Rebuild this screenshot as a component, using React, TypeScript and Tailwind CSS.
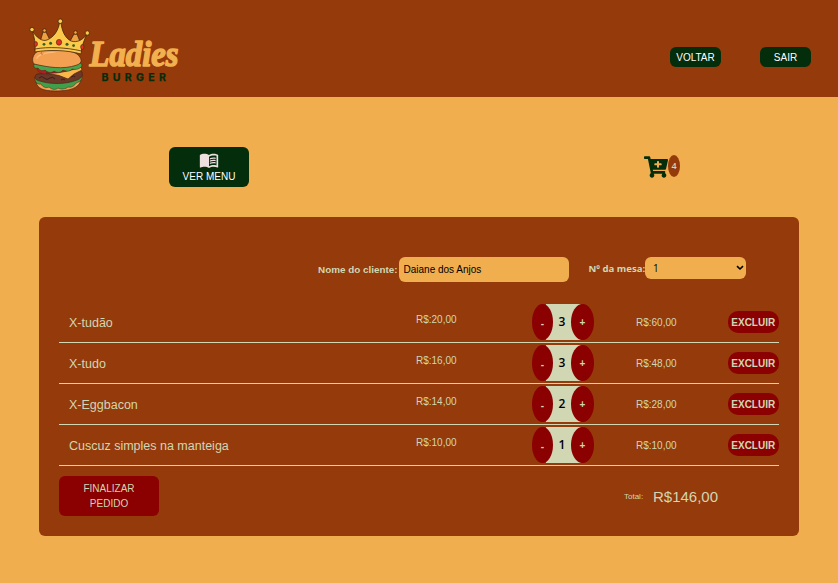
import { FaCartPlus } from "react-icons/fa";
import { MdMenuBook } from "react-icons/md";

const items = [
  { name: "X-tudão", price: "20,00", qty: 3, total: "60,00" },
  { name: "X-tudo", price: "16,00", qty: 3, total: "48,00" },
  { name: "X-Eggbacon", price: "14,00", qty: 2, total: "28,00" },
  { name: "Cuscuz simples na manteiga", price: "10,00", qty: 1, total: "10,00" },
];

function Logo() {
  return (
    <svg viewBox="24 14 160 80" className="mt-[14px] ml-6 h-20 w-40 overflow-visible" aria-label="Ladies Burger">
      {/* burger */}
      <g stroke="#4a2412" strokeWidth="0.7" strokeLinejoin="round">
        <path d="M36 82 C37 88 43 91 55 91 C68 91 79 89 81 80 L70 79Z" fill="#f2a052" />
        <path d="M35 77 C34 81 37 85 41 84 C43 88 47 88 49 87 C52 90 56 90 58 88 C61 90 66 89 68 87 C72 88 75 85 76 83 C80 82 83 79 82 76Z" fill="#3f9f4a" strokeWidth=".5" />
        <path d="M37 74 C33 77 35 80 40 81 C50 84.5 66 84.5 77 80 C83 78 84 73 80 70 L62 72Z" fill="#6b3726" />
        <path d="M37 68 C37 73 43 74.5 49 74 L75 71 L79 67Z" fill="#b01e24" strokeWidth=".4" />
        <path d="M46 73 C57 74 69 71 81 67 L82 70 L74 74 L68 79 L59 75.5Z" fill="#fbb64a" />
        <path d="M34 64 C33 67 35 69 38 68 C40 71 43 71 45 70 C48 73 52 73 54 71 C57 73 61 73 63 70 C67 72 71 71 72 69 C76 70 80 69 82 66 C82 63 79 62 76 63Z" fill="#46a64e" strokeWidth=".5" />
        <path d="M34 64 C31 60 33 54 38 51 C48 48 70 49 77 54 C82 58 83 63 77 65 C63 70 47 67 34 64Z" fill="#f3a052" />
      </g>
      <path d="M36 58 C40 52 48 52 57 52 C48 54 41 53 37 59Z" fill="#ffc483" opacity=".8" />
      <path d="M43 53.5 a1 1.2 0 1 1 -1 -1.5" fill="none" stroke="#bc632a" strokeWidth=".8" />
      <path d="M39 78 q3 -3 5 0 q3 3 6 0 q3 -2 5 1 M61 80 q2 -2 4 0 M71 77 q3 -2 4 0" fill="none" stroke="#351d17" strokeWidth=".9" />
      {/* crown */}
      <g stroke="#45270f" strokeWidth="0.8" strokeLinejoin="round">
        <path d="M40 42 L43 32 L46 32 L51 42Z M69 43 L74 34 L77 34 L81 44Z" fill="#efa040" />
        <circle cx="44.5" cy="30.5" r="1.8" fill="#efa040" />
        <circle cx="75.5" cy="32.5" r="1.8" fill="#efa040" />
        <path d="M35 50 C36 44 34 37 32.5 31 C36 37 42 42 47 40 C54 37 58 31 59.5 23 L61 23 C62 31 65 38 71 41 C77 43 83 40 87 34 C84 40 82 46 81 52 C67 48 49 47 35 50Z" fill="#fcca4b" />
        <path d="M35 49 C48 46.5 67 47.5 81.5 51 L81 54 C67 50 49 49.5 35 52Z" fill="#fcca4b" />
        <circle cx="60.3" cy="21.2" r="2.3" fill="#fcca4b" />
        <circle cx="32" cy="29.6" r="2.2" fill="#fcca4b" />
        <circle cx="87.3" cy="33" r="2.2" fill="#fcca4b" />
        <ellipse cx="59" cy="42.3" rx="2.7" ry="2.9" fill="#e52e22" strokeWidth=".6" />
        <ellipse cx="35.8" cy="44" rx="1.7" ry="2.4" fill="#e52e22" strokeWidth=".6" />
        <ellipse cx="82.3" cy="47" rx="1.7" ry="2.4" fill="#e52e22" strokeWidth=".6" />
      </g>
      <g fill="#315f27">
        <circle cx="44" cy="44.3" r="1.4" /><circle cx="50.6" cy="43.3" r="1.5" />
        <circle cx="67" cy="44.3" r="1.5" /><circle cx="73.6" cy="45.6" r="1.4" />
      </g>
      <text x="89.5" y="66.3" textLength="89" lengthAdjust="spacingAndGlyphs" fill="#f2b04e" stroke="#f2b04e" strokeWidth="1.5" strokeLinejoin="round" className="font-['Liberation_Serif',serif] text-[36px] font-bold italic">Ladies</text>
      <text x="101.5" y="80.5" textLength="64.5" fill="#032d0b" stroke="#032d0b" strokeWidth=".25" className="font-['Inter',sans-serif] text-[10.5px] font-bold">BURGER</text>
    </svg>
  );
}

export default function App() {
  return (
    <div className="h-[583px] w-[838px] overflow-hidden bg-[#f0ae4f] font-['Liberation_Sans',Arial,sans-serif] text-[10px] text-[#d1d6b3]">
      <header className="flex h-[97px] items-start bg-[#953a0a]">
        <Logo />
        <nav className="mt-[47px] mr-[27px] ml-auto flex gap-[39px] text-white">
          <button className="h-[20px] w-[51px] rounded-[6px] bg-[#032d0b]">VOLTAR</button>
          <button className="h-[20px] w-[51px] rounded-[6px] bg-[#032d0b]">SAIR</button>
        </nav>
      </header>

      <div className="flex h-[120px] items-start justify-between pt-[50px] pr-[158px] pl-[169px]">
        <button className="flex h-10 w-20 flex-col items-center rounded-[6px] bg-[#032d0b] pt-[3px] text-white">
          <MdMenuBook className="h-5 w-5 text-[#eee0e0]" />
          <span className="leading-[13px]">VER MENU</span>
        </button>
        <div className="flex items-center pt-[7px]">
          <FaCartPlus className="mt-px h-6 w-6 text-[#032d0b]" />
          <span className="mb-[2px] flex h-[22px] w-3 items-center justify-center rounded-[50%] bg-[#953a0a] font-['Open_Sans',sans-serif] text-[9px] font-semibold">4</span>
        </div>
      </div>

      <main className="ml-[39px] h-[319px] w-[759.5px] rounded-[6px] bg-[#953a0a] px-5 pt-10">
        <div className="flex h-[45px] items-start pl-[259px] font-bold">
          <label className="flex h-[25px] w-[250.5px] items-center">
            <span className="w-[80.5px] pt-[2px] whitespace-nowrap text-[9.9px]">Nome do cliente:</span>
            <input className="h-[25px] w-[170px] rounded-[6px] bg-[#f0ae4f] px-[5px] text-[10px] font-normal text-black" defaultValue="Daiane dos Anjos" />
          </label>
          <label className="ml-[20px] flex h-[22px] items-center">
            <span className="w-[56.5px] pt-[2px] whitespace-nowrap font-['Open_Sans',sans-serif] text-[9.6px]">Nº da mesa:</span>
            <span className="flex h-[22px] w-[100.5px] items-center justify-between rounded-[6px] bg-[#f0ae4f] pr-[2px] pl-[8px] font-['Open_Sans',sans-serif] font-normal text-black">
              1
              <svg viewBox="0 0 8 6" className="h-[6px] w-2" fill="none" stroke="currentColor" strokeWidth="1.6"><path d="M1 1.2 4 4 7 1.2" /></svg>
            </span>
          </label>
        </div>

        <ul>
          {items.map((item) => (
            <li key={item.name} className="flex h-[41px] items-center border-b border-[#d1d6b3]">
              <span className="w-[357px] pt-[2px] pl-[10px] text-[12.5px]">{item.name}</span>
              <span className="w-[116px] pb-[5px]">R$:{item.price}</span>
              <div className="flex h-9 w-[62px] justify-between bg-[linear-gradient(to_right,transparent_14px,#d1d6b3_14px,#d1d6b3_49px,transparent_49px)] font-bold">
                <button className="h-9 w-[21px] rounded-[50%] bg-[#8b0000] pt-[3px]">-</button>
                <span className="self-center font-['Open_Sans',sans-serif] text-[12px] font-semibold text-black">{item.qty}</span>
                <button className="h-9 w-[23px] rounded-[50%] bg-[#8b0000]">+</button>
              </div>
              <span className="ml-[42px] w-[92px]">R$:{item.total}</span>
              <button className="h-[22px] w-[50.5px] rounded-[10px] bg-[#8b0000] font-bold">EXCLUIR</button>
            </li>
          ))}
        </ul>

        <footer className="flex items-start pt-[10px]">
          <button className="h-10 w-[100px] rounded-[6px] bg-[#8b0000] px-5 leading-[15px]">FINALIZAR PEDIDO</button>
          <div className="ml-[465px] flex h-10 items-center pt-px">
            <span className="w-[29px] text-[8px]">Total:</span>
            <span className="pt-px text-[15px]">R$146,00</span>
          </div>
        </footer>
      </main>
    </div>
  );
}
